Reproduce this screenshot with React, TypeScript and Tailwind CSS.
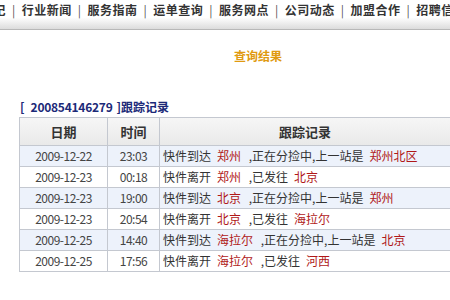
const nav = ['公司简记', '行业新闻', '服务指南', '运单查询', '服务网点', '公司动态', '加盟合作', '招聘信息'];

type Row = { date: string; time: string; act: string; place: string; mid: string; next: string };

const rows: Row[] = [
  { date: '2009-12-22', time: '23:03', act: '快件到达', place: '郑州', mid: ',正在分捡中,上一站是', next: '郑州北区' },
  { date: '2009-12-23', time: '00:18', act: '快件离开', place: '郑州', mid: ',已发往', next: '北京' },
  { date: '2009-12-23', time: '19:00', act: '快件到达', place: '北京', mid: ',正在分捡中,上一站是', next: '郑州' },
  { date: '2009-12-23', time: '20:54', act: '快件离开', place: '北京', mid: ',已发往', next: '海拉尔' },
  { date: '2009-12-25', time: '14:40', act: '快件到达', place: '海拉尔', mid: ',正在分捡中,上一站是', next: '北京' },
  { date: '2009-12-25', time: '17:56', act: '快件离开', place: '海拉尔', mid: ',已发往', next: '河西' },
];

export default function App() {
  return (
    <div className="w-[450px] h-[300px] overflow-hidden bg-white font-['SimSun','Noto_Sans_CJK_SC',sans-serif] text-[12px] text-[#333]">
      {/* top nav */}
      <div className="h-[30px] border-b border-[#b8b8b8] bg-gradient-to-b from-white from-60% to-[#dcdcdc] overflow-hidden">
        <div className="flex items-center h-[19px] ml-[-44px] whitespace-nowrap font-bold text-[#333] tracking-[0.5px]">
          {nav.map((n, i) => (
            <div key={n} className="flex items-center">
              {i > 0 && <span className="mx-[6px] font-normal text-[#555]">|</span>}
              <span>{n}</span>
            </div>
          ))}
        </div>
      </div>

      <div className="mt-[17px] text-center pl-[66px] font-bold text-[#e09a10] leading-[18px]">查询结果</div>

      <div className="mt-[35px] ml-[20px] flex font-bold text-[#1c2a78] leading-[14px] whitespace-nowrap">
        <span>[</span>
        <span className="ml-[6px] tracking-[-0.25px]">200854146279</span>
        <span className="ml-[4px]">]跟踪记录</span>
      </div>

      <table className="ml-[19px] mt-[3px] w-[432px] border-collapse table-fixed">
        <colgroup>
          <col className="w-[88px]" />
          <col className="w-[52px]" />
          <col />
        </colgroup>
        <thead>
          <tr className="h-[28px] bg-gradient-to-b from-[#f6f6f6] to-[#e9e9e9]">
            <th className="border border-[#c4c8d0] font-bold text-[#333] text-[13px]">日期</th>
            <th className="border border-[#c4c8d0] font-bold text-[#333] text-[13px]">时间</th>
            <th className="border border-[#c4c8d0] font-bold text-[#333] text-[13px]">跟踪记录</th>
          </tr>
        </thead>
        <tbody>
          {rows.map((r, i) => (
            <tr key={i} className={i % 2 === 0 ? 'h-[21px] bg-[#edf2fb]' : 'h-[21px] bg-white'}>
              <td className="border border-[#c4c8d0] text-center tracking-[-0.5px] text-[#444]">{r.date}</td>
              <td className="border border-[#c4c8d0] text-center tracking-[-0.5px] text-[#444]">{r.time}</td>
              <td className="border border-[#c4c8d0] pl-[3px] whitespace-nowrap text-[#333]">
                {r.act}
                <span className="ml-[6px] mr-[5px] text-[#b01818]">{r.place}</span>
                {' '}{r.mid}
                <span className="ml-[6px] text-[#b01818]">{r.next}</span>
              </td>
            </tr>
          ))}
        </tbody>
      </table>
    </div>
  );
}
